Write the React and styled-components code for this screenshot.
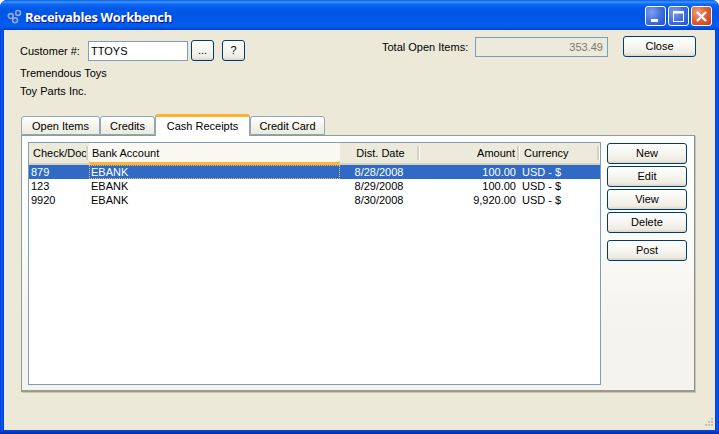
import React from "react";
import styled, { createGlobalStyle } from "styled-components";

const Global = createGlobalStyle`
  html, body { margin: 0; padding: 0; background: #fff; }
  * { box-sizing: border-box; }
  #root { width: 719px; height: 434px; }
`;

const UI = `"Liberation Sans", "Noto Sans", sans-serif`;

const Window = styled.div`
  width: 719px; height: 434px; display: flex; flex-direction: column;
  border-radius: 7px 7px 0 0; overflow: hidden;
  background: linear-gradient(180deg, #0840d8 0, #0840d8 431px, #0026a8 434px);
  font: 11px ${UI}; color: #000;
`;
const TitleBar = styled.div`
  height: 30px; flex: none; display: flex; align-items: flex-start; padding: 6px 7px 0 7px;
  background: linear-gradient(180deg, #0a5be0 0, #3d95ff 2px, #0f6af5 4px, #0058e6 9px, #0055e5 18px, #0060f0 26px, #0048d8 29px, #003dd0 30px);
`;
const AppIcon = styled.svg` width: 15px; height: 15px; margin: 3px 3px 0 0; flex: none; `;
const Title = styled.div`
  flex: 1; color: #fff; font: bold 13px/22px "Open Sans", sans-serif; letter-spacing: -0.33px;
  text-shadow: 1px 1px 0 #0f1089;
`;
const Caption = styled.button`
  width: 21px; height: 20px; margin-left: 2px; padding: 0; border: 1px solid #fff; border-radius: 3px;
  display: flex; align-items: center; justify-content: center;
  background: ${p => p.$close
    ? "radial-gradient(circle at 30% 30%, #f0a080 0, #e0603a 45%, #c73a18 100%)"
    : "radial-gradient(circle at 30% 30%, #7fa0f0 0, #4070e0 50%, #2550cf 100%)"};
`;
const Body = styled.div`
  flex: 1; min-height: 0; margin: 0 4px 4px;
  background: #ece9d8; padding: 6px 0 0 16px;
  box-shadow: -1px 0 0 #0040d0, 1px 0 0 #0040d0, -3px 0 0 #0055f0, 3px 0 0 #0055f0;
  display: flex; flex-direction: column; position: relative;
`;
const Top = styled.div`
  display: flex; align-items: flex-start; height: 69px; flex: none;
`;
const CustomerCol = styled.div` width: 362px; padding-top: 4px; `;
const CustomerRow = styled.div` display: flex; align-items: center; height: 21px; `;
const Label = styled.span` white-space: nowrap; `;
const CustLabel = styled(Label)` width: 68px; `;
const Input = styled.div`
  width: 100px; height: 20px; background: #fff; border: 1px solid #7f9db9; padding: 0 2px;
  line-height: 18px;
`;
const Btn = styled.button`
  height: 21px; width: ${p => p.$w || 80}px; margin-left: ${p => p.$ml || 0}px; padding: 0 0 1px;
  font: 11px ${UI}; color: #000; border: 1px solid #003c74; border-radius: 3px;
  background: linear-gradient(180deg, #fff 0, #f6f5f0 50%, #eeece2 85%, #d9d5c6 100%);
  flex: none;
`;
const NameLine = styled.div` margin-top: ${p => p.$mt}px; height: 13px; line-height: 13px; `;
const TotalGroup = styled.div` display: flex; align-items: center; height: 20px; margin-top: 1px; `;
const TotalLabel = styled(Label)` width: 93px; `;
const TotalField = styled.div`
  width: 133px; height: 20px; background: #ebeadb; border: 1px solid #7f9db9; color: #7a7a70;
  text-align: right; padding-right: 4px; line-height: 18px;
`;
const CloseBtn = styled(Btn)` margin-left: 15px; `;

const Tabs = styled.div`
  display: flex; align-items: flex-end; height: 22px; padding-left: 1px; margin-top: 8px; flex: none;
  position: relative; z-index: 1;
`;
const Tab = styled.div`
  width: ${p => p.$w}px; height: ${p => (p.$active ? 22 : 19)}px; margin-bottom: ${p => (p.$active ? -1 : 0)}px;
  display: flex; align-items: center; justify-content: center;
  border: 1px solid #91a7b4; border-bottom: ${p => (p.$active ? 0 : 1)}px solid #91a7b4;
  border-radius: 3px 3px 0 0;
  background: ${p => (p.$active ? "#fff" : "linear-gradient(180deg, #fff, #f3f1e8 60%, #ecebdf)")};
  ${p => p.$active && "border-top: 3px solid #ffb12c; padding-bottom: 2px;"}
`;
const Panel = styled.div`
  width: 674px; height: 257px; flex: none; margin-left: 1px;
  border: 1px solid #919b9c; border-right-color: #8a9090; border-bottom: 2px solid #9a9a90;
  box-shadow: 1px 1px 0 #c9c6b4;
  background: linear-gradient(180deg, #fff 0, #fbfbf8 40%, #f4f3ee 75%);
  padding: 6px 7px 6px 6px; display: flex; gap: 6px;
`;
const Table = styled.div`
  width: 573px; height: 243px; border: 1px solid #7f9db9; background: #fff; flex: none;
  display: flex; flex-direction: column;
`;
const cols = "60px 251px 80px 100px 1fr";
const HeaderRow = styled.div`
  height: 22px; display: grid; grid-template-columns: ${cols}; background: #ebeadb; flex: none;
`;
const HeadCell = styled.div`
  height: 22px; overflow: hidden; white-space: nowrap; line-height: 20px; position: relative;
  padding: 0 ${p => (p.$align === "right" ? 5 : 3)}px 0 ${p => (p.$hot ? 3 : 4)}px;
  text-align: ${p => p.$align || "left"};
  background: ${p => (p.$hot ? "#faf8f1" : "transparent")};
  box-shadow: inset 0 -2px 0 #d6d2c0;
  &::after {
    content: ""; position: absolute; right: 0; top: 3px; bottom: 5px; width: 2px;
    background: #d6d2c0; border-right: 1px solid #fff;
  }
  ${p => p.$hot && `
    box-shadow: inset 0 -3px 0 #fcb43a;
    border-radius: 0 0 2px 2px;
    &::after { display: none; }
  `}
`;
const Row = styled.div`
  height: 14px; display: grid; grid-template-columns: ${cols}; line-height: 14px; flex: none;
  background: ${p => (p.$sel ? "#316ac5" : "#fff")};
  color: ${p => (p.$sel ? "#fff" : "#000")};
`;
const Cell = styled.div`
  overflow: hidden; white-space: nowrap; padding: 0 4px 0 2px;
  text-align: ${p => p.$align || "left"};
  ${p => p.$focus && "outline: 1px dotted #e8c070; outline-offset: -1px;"}
`;
const Side = styled.div` display: flex; flex-direction: column; gap: 2px; padding-top: 1px; `;
const PostBtn = styled(Btn)` margin-top: 5px; `;
const Grip = styled.svg` position: absolute; right: 0; bottom: 0; `;

const rows = [
  ["879", "EBANK", "8/28/2008", "100.00", "USD - $"],
  ["123", "EBANK", "8/29/2008", "100.00", "USD - $"],
  ["9920", "EBANK", "8/30/2008", "9,920.00", "USD - $"],
];

export default function App() {
  return (
    <Window>
      <Global />
      <TitleBar>
        <AppIcon viewBox="0 0 16 16" fill="none" stroke="#8fa6d8" strokeWidth="1.8">
          <circle cx="4" cy="7.5" r="2.6" />
          <circle cx="11.8" cy="4.2" r="2.6" />
          <circle cx="8.6" cy="12" r="2.6" />
        </AppIcon>
        <Title>Receivables Workbench</Title>
        <Caption>
          <svg width="11" height="11" viewBox="0 0 11 11"><rect x="1" y="8" width="7" height="3" fill="#fff" /></svg>
        </Caption>
        <Caption>
          <svg width="13" height="13" viewBox="0 0 13 13" fill="none"><rect x="1.5" y="1.5" width="10" height="10" stroke="#fff" /><rect x="1" y="1" width="11" height="2.5" fill="#fff" /></svg>
        </Caption>
        <Caption $close>
          <svg width="13" height="13" viewBox="0 0 13 13" stroke="#fff" strokeWidth="2.4"><path d="M2 2l9 9M11 2l-9 9" /></svg>
        </Caption>
      </TitleBar>
      <Body>
        <Top>
          <CustomerCol>
            <CustomerRow>
              <CustLabel>Customer #:</CustLabel>
              <Input>TTOYS</Input>
              <Btn $w={23} $ml={3}>...</Btn>
              <Btn $w={23} $ml={8}>?</Btn>
            </CustomerRow>
            <NameLine $mt={6}>Tremendous Toys</NameLine>
            <NameLine $mt={5}>Toy Parts Inc.</NameLine>
          </CustomerCol>
          <TotalGroup>
            <TotalLabel>Total Open Items:</TotalLabel>
            <TotalField>353.49</TotalField>
          </TotalGroup>
          <CloseBtn $w={73}>Close</CloseBtn>
        </Top>
        <Tabs>
          <Tab $w={79}>Open Items</Tab>
          <Tab $w={55}>Credits</Tab>
          <Tab $w={95} $active>Cash Receipts</Tab>
          <Tab $w={75}>Credit Card</Tab>
        </Tabs>
        <Panel>
          <Table>
            <HeaderRow>
              <HeadCell>Check/Document #</HeadCell>
              <HeadCell $hot>Bank Account</HeadCell>
              <HeadCell $align="center">Dist. Date</HeadCell>
              <HeadCell $align="right">Amount</HeadCell>
              <HeadCell>Currency</HeadCell>
            </HeaderRow>
            {rows.map((r, i) => (
              <Row key={r[0]} $sel={i === 0}>
                <Cell>{r[0]}</Cell>
                <Cell $focus={i === 0}>{r[1]}</Cell>
                <Cell $align="center">{r[2]}</Cell>
                <Cell $align="right">{r[3]}</Cell>
                <Cell>{r[4]}</Cell>
              </Row>
            ))}
          </Table>
          <Side>
            <Btn>New</Btn>
            <Btn>Edit</Btn>
            <Btn>View</Btn>
            <Btn>Delete</Btn>
            <PostBtn>Post</PostBtn>
          </Side>
        </Panel>
        <Grip width="13" height="13" viewBox="0 0 13 13" fill="#c4c1b0">
          <rect x="9" y="1" width="2" height="2" />
          <rect x="6" y="4" width="2" height="2" /><rect x="9" y="4" width="2" height="2" />
          <rect x="3" y="7" width="2" height="2" /><rect x="6" y="7" width="2" height="2" /><rect x="9" y="7" width="2" height="2" />
        </Grip>
      </Body>
    </Window>
  );
}
